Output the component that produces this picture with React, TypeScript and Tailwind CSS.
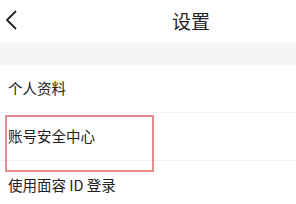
import React from 'react';

const font = { fontFamily: '"Noto Sans CJK SC", "Noto Sans", sans-serif' };

const rows = ['个人资料', '账号安全中心', '使用面容 ID 登录'];

export default function App() {
  return (
    <div className="relative w-[296px] h-[204px] overflow-hidden bg-white text-[#222]" style={font}>
      {/* Header */}
      <div className="relative flex items-center justify-center h-[43px]">
        <svg className="absolute left-[5px] top-[10px]" width="12" height="20" viewBox="0 0 12 20" fill="none">
          <path d="M10.5 1.5 L2 10 L10.5 18.5" stroke="#222" strokeWidth="1.8" strokeLinecap="round" strokeLinejoin="round" />
        </svg>
        <span className="text-[19px] leading-none text-[#222] ml-[86px] -mt-[3px]">设置</span>
      </div>

      {/* Gray band */}
      <div className="h-[22px] bg-[#f5f5f5]" />

      {/* List */}
      <div className="flex flex-col">
        {rows.map((r, i) => (
          <div key={r} className={`flex items-center h-[48px] px-[8px] ${i < rows.length - 1 ? 'border-b border-[#f0f0f0]' : ''}`}>
            <span className="text-[14.5px] leading-none text-[#222]">{r}</span>
          </div>
        ))}
      </div>

      {/* Highlight annotation */}
      <div className="absolute left-[5px] top-[115px] w-[149px] h-[57px] border-2 border-[#e58a8f]" />
    </div>
  );
}
